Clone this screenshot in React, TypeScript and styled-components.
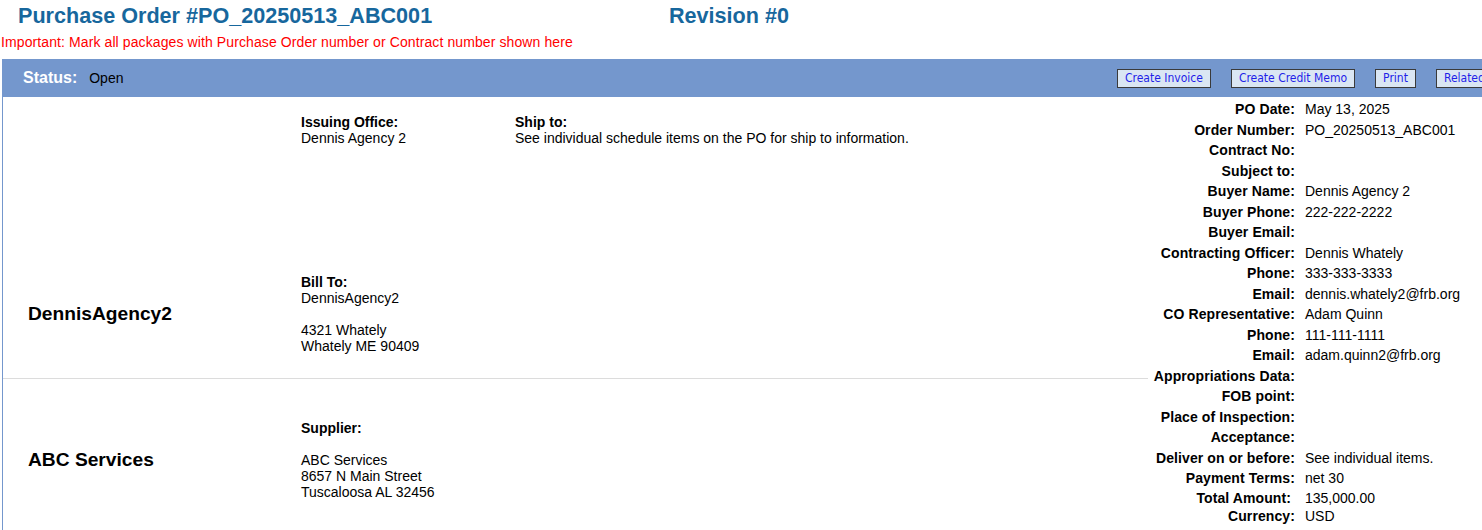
import React from 'react';
import styled, { createGlobalStyle } from 'styled-components';

const GlobalStyle = createGlobalStyle`
  html, body { margin: 0; padding: 0; background: #ffffff; overflow: hidden; }
  body {
    font-family: "Liberation Sans", Arial, sans-serif;
    font-size: 14px;
    color: #000000;
  }
`;

const Page = styled.div`
  width: 1600px;
`;

const TitleRow = styled.div`
  display: grid;
  grid-template-columns: 651px auto;
  padding: 3px 0 0 18px;
`;

const Title = styled.h1`
  margin: 0;
  font-size: 21.6px;
  line-height: 25px;
  font-weight: bold;
  color: #17679d;
`;

const Notice = styled.div`
  margin-top: 6px;
  padding-left: 1px;
  line-height: 16px;
  color: #ff0000;
  letter-spacing: 0.1px;
`;

const StatusBar = styled.div`
  margin: 9px 0 0 2px;
  height: 38px;
  background: #7497cd;
  display: grid;
  grid-template-columns: 1115px auto;
  align-items: center;
`;

const StatusGroup = styled.div`
  display: flex;
  align-items: baseline;
  gap: 12px;
  padding-left: 21px;
`;

const StatusLabel = styled.span`
  color: #ffffff;
  font-weight: bold;
  font-size: 16px;
`;

const StatusValue = styled.span`
  font-size: 14px;
  color: #000000;
`;

const Actions = styled.div`
  display: flex;
  gap: 20px;
  padding-top: 1px;
`;

const ActionButton = styled.button`
  box-sizing: border-box;
  height: 19px;
  padding: 0 7px;
  border: 1px solid #3a3a3a;
  background: #dae6f3;
  color: #1f1fe8;
  font-family: "DejaVu Sans Condensed", "DejaVu Sans", Tahoma, sans-serif;
  font-stretch: condensed;
  font-size: 12px;
  line-height: 17px;
  white-space: nowrap;
  cursor: pointer;
`;

const Body = styled.div`
  margin-left: 2px;
  border-left: 1px solid #7497cd;
  display: grid;
  grid-template-columns: 1145px auto;
  align-items: start;
`;

const LeftArea = styled.div`
  display: flex;
  flex-direction: column;
`;

const Block = styled.div<{ $divider?: boolean; $pad?: string }>`
  padding: ${(p) => p.$pad || '0'};
  border-bottom: ${(p) => (p.$divider ? '1px solid #dcdcdc' : 'none')};
`;

const TopRow = styled.div`
  display: grid;
  grid-template-columns: 298px 214px 1fr;
  padding-top: 17px;
`;

const MainRow = styled.div<{ $top?: number }>`
  display: grid;
  grid-template-columns: 298px 1fr;
  align-items: center;
  margin-top: ${(p) => p.$top || 0}px;
`;

const PartyName = styled.div`
  padding-left: 25px;
  font-size: 19.2px;
  font-weight: bold;
  line-height: 22px;
`;

const AddressBlock = styled.div`
  line-height: 16px;
`;

const FieldLabel = styled.div`
  font-weight: bold;
`;

const Line = styled.div`
  min-height: 16px;
  white-space: nowrap;
`;

const InfoPanel = styled.div`
  padding-top: 2px;
  background: #ffffff;
`;

const InfoRow = styled.div<{ $h?: number }>`
  display: grid;
  grid-template-columns: 147px auto;
  column-gap: 10px;
  align-items: center;
  height: ${(p) => p.$h || 20.5}px;
`;

const InfoLabel = styled.div<{ $shift?: number }>`
  justify-self: end;
  padding-right: ${(p) => p.$shift || 0}px;
  font-weight: bold;
  white-space: nowrap;
  letter-spacing: 0.1px;
`;

const InfoValue = styled.div`
  white-space: nowrap;
`;

type Info = { label: string; value?: string; h?: number; shift?: number };

const info: Info[] = [
  { label: 'PO Date:', value: 'May 13, 2025' },
  { label: 'Order Number:', value: 'PO_20250513_ABC001' },
  { label: 'Contract No:' },
  { label: 'Subject to:' },
  { label: 'Buyer Name:', value: 'Dennis Agency 2' },
  { label: 'Buyer Phone:', value: '222-222-2222' },
  { label: 'Buyer Email:' },
  { label: 'Contracting Officer:', value: 'Dennis Whately' },
  { label: 'Phone:', value: '333-333-3333' },
  { label: 'Email:', value: 'dennis.whately2@frb.org' },
  { label: 'CO Representative:', value: 'Adam Quinn' },
  { label: 'Phone:', value: '111-111-1111' },
  { label: 'Email:', value: 'adam.quinn2@frb.org' },
  { label: 'Appropriations Data:' },
  { label: 'FOB point:' },
  { label: 'Place of Inspection:' },
  { label: 'Acceptance:' },
  { label: 'Deliver on or before:', value: 'See individual items.' },
  { label: 'Payment Terms:', value: 'net 30' },
  { label: 'Total Amount:', value: '135,000.00', h: 18, shift: 4 },
  { label: 'Currency:', value: 'USD', h: 19 },
];

export default function App() {
  return (
    <Page>
      <GlobalStyle />
      <TitleRow>
        <Title>Purchase Order #PO_20250513_ABC001</Title>
        <Title>Revision #0</Title>
      </TitleRow>
      <Notice>Important: Mark all packages with Purchase Order number or Contract number shown here</Notice>
      <StatusBar>
        <StatusGroup>
          <StatusLabel>Status:</StatusLabel>
          <StatusValue>Open</StatusValue>
        </StatusGroup>
        <Actions>
          <ActionButton>Create Invoice</ActionButton>
          <ActionButton>Create Credit Memo</ActionButton>
          <ActionButton>Print</ActionButton>
          <ActionButton>Related Documents</ActionButton>
        </Actions>
      </StatusBar>
      <Body>
        <LeftArea>
          <Block $divider $pad="0 0 24px 0">
            <TopRow>
              <div />
              <AddressBlock>
                <FieldLabel>Issuing Office:</FieldLabel>
                <Line>Dennis Agency 2</Line>
              </AddressBlock>
              <AddressBlock>
                <FieldLabel>Ship to:</FieldLabel>
                <Line>See individual schedule items on the PO for ship to information.</Line>
              </AddressBlock>
            </TopRow>
            <MainRow $top={128}>
              <PartyName>DennisAgency2</PartyName>
              <AddressBlock>
                <FieldLabel>Bill To:</FieldLabel>
                <Line>DennisAgency2</Line>
                <Line />
                <Line>4321 Whately</Line>
                <Line>Whately ME 90409</Line>
              </AddressBlock>
            </MainRow>
          </Block>
          <Block $pad="41px 0">
            <MainRow>
              <PartyName>ABC Services</PartyName>
              <AddressBlock>
                <FieldLabel>Supplier:</FieldLabel>
                <Line />
                <Line>ABC Services</Line>
                <Line>8657 N Main Street</Line>
                <Line>Tuscaloosa AL 32456</Line>
              </AddressBlock>
            </MainRow>
          </Block>
        </LeftArea>
        <InfoPanel>
          {info.map((row, i) => (
            <InfoRow key={i} $h={row.h}>
              <InfoLabel $shift={row.shift}>{row.label}</InfoLabel>
              <InfoValue>{row.value}</InfoValue>
            </InfoRow>
          ))}
        </InfoPanel>
      </Body>
    </Page>
  );
}
